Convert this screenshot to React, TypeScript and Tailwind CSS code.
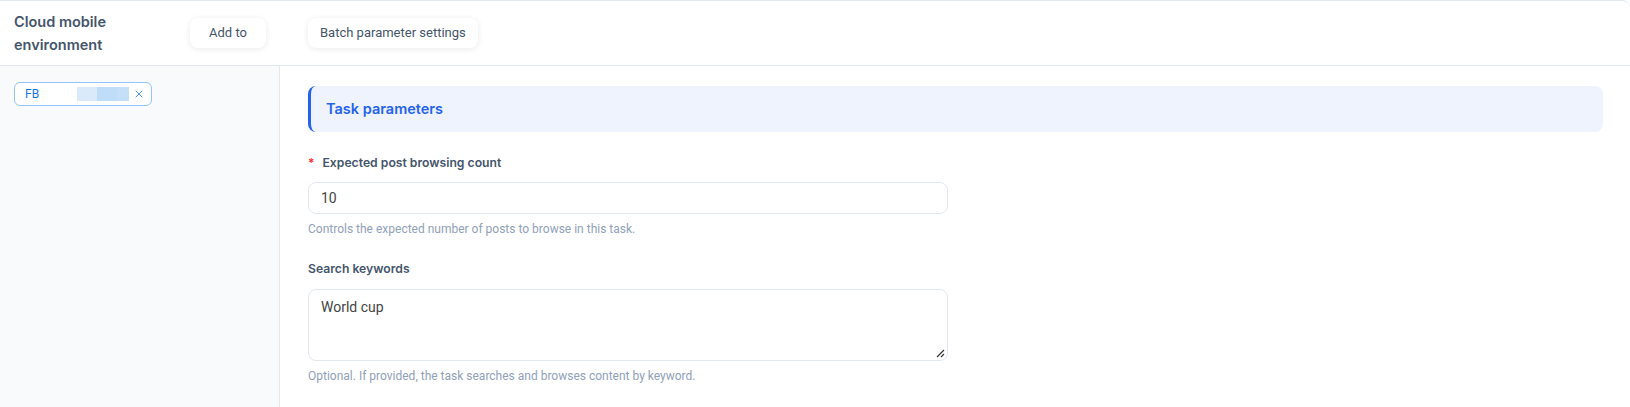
import { X } from "lucide-react";

const sans = "font-['Inter','Noto_Sans',sans-serif]";
const ui = "font-['Roboto','Liberation_Sans',sans-serif]";

function HeaderButton({ label, className }: { label: string; className?: string }) {
  return (
    <button
      className={`h-[30px] rounded-lg bg-white text-[13px] text-slate-600 shadow-[0_1px_6px_rgba(15,23,42,0.09)] ${ui} ${className ?? ""}`}
    >
      {label}
    </button>
  );
}

export default function App() {
  return (
    <div className="w-[1630px] h-[407px] bg-white border-t border-slate-200 rounded-tr-lg overflow-hidden flex flex-col">
      {/* header */}
      <div className="h-[65px] flex items-center pl-[14px] border-b border-slate-200 shrink-0">
        <div className={`w-[176px] text-[14.5px] leading-[23px] font-semibold text-slate-600 ${sans}`}>
          Cloud mobile
          <br />
          environment
        </div>
        <HeaderButton label="Add to" className="w-[76px]" />
        <HeaderButton label="Batch parameter settings" className="ml-[42px] px-[12px]" />
      </div>

      <div className="flex flex-1 min-h-0">
        {/* sidebar */}
        <div className="w-[280px] shrink-0 bg-[#f8fafc] border-r border-slate-200 pl-[14px] pt-[16px]">
          <div className="w-[138px] h-[24px] rounded-md border border-[#93c5fd] bg-white flex items-center pl-[10px] pr-[6px]">
            <span className={`text-[12px] text-[#1677e6] ${ui}`}>FB</span>
            <div className="ml-[38px] flex h-[14px]">
              <div className="w-[20px] bg-[#dbeafb]" />
              <div className="w-[20px] bg-[#bfdcf8]" />
              <div className="w-[12px] bg-[#c5dff8]" />
            </div>
            <X className="ml-auto text-[#1677e6]" size={12} strokeWidth={1.6} />
          </div>
        </div>

        {/* main */}
        <div className="flex-1 pl-[28px] pr-[27px] pt-[20px]">
          <div className="h-[46px] rounded-lg bg-[#eef3fd] border-l-[3px] border-[#2563eb] flex items-center pl-[15px]">
            <span className={`text-[14.5px] font-semibold text-[#2563eb] ${sans}`}>Task parameters</span>
          </div>

          <div className="w-[640px]">
            <div className={`mt-[21px] flex items-center h-[20px] text-[12.2px] font-semibold text-slate-600 ${sans}`}>
              <span className="text-red-500 mr-[8px] text-[12px]">*</span>
              Expected post browsing count
            </div>
            <div className={`mt-[9px] h-[32px] rounded-lg border border-slate-200 flex items-center px-[12px] text-[14px] text-[#444] ${ui}`}>
              10
            </div>
            <div className={`mt-[7px] text-[12px] leading-[16px] text-slate-400 ${ui}`}>
              Controls the expected number of posts to browse in this task.
            </div>

            <div className={`mt-[22px] h-[20px] flex items-center text-[12.2px] font-semibold text-slate-600 ${sans}`}>
              Search keywords
            </div>
            <div className={`relative mt-[10px] h-[72px] rounded-lg border border-slate-200 px-[12px] pt-[7px] text-[14px] text-[#444] ${ui}`}>
              World cup
              <svg className="absolute right-[2px] bottom-[2px]" width="10" height="10" viewBox="0 0 10 10">
                <path d="M9 2 L2 9 M9 6 L6 9" stroke="#333" strokeWidth="1.2" />
              </svg>
            </div>
            <div className={`mt-[7px] text-[12px] leading-[16px] text-slate-400 ${ui}`}>
              Optional. If provided, the task searches and browses content by keyword.
            </div>
          </div>
        </div>
      </div>
    </div>
  );
}
